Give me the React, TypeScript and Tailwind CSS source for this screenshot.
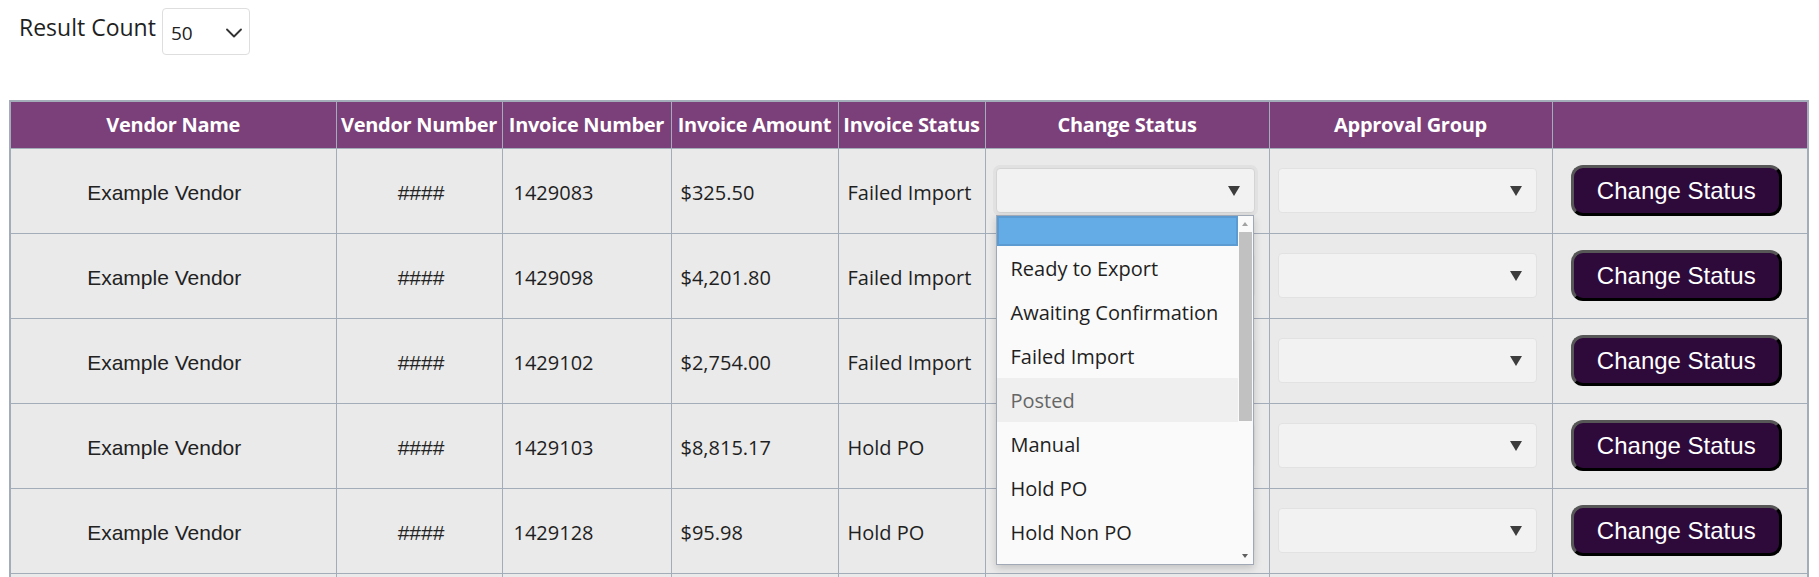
import { ChevronDown } from "lucide-react"

interface InvoiceRow {
  invoice: string
  amount: string
  status: string
}

const rows: InvoiceRow[] = [
  { invoice: "1429083", amount: "$325.50", status: "Failed Import" },
  { invoice: "1429098", amount: "$4,201.80", status: "Failed Import" },
  { invoice: "1429102", amount: "$2,754.00", status: "Failed Import" },
  { invoice: "1429103", amount: "$8,815.17", status: "Hold PO" },
  { invoice: "1429128", amount: "$95.98", status: "Hold PO" },
  { invoice: "1429131", amount: "$1,120.00", status: "Hold PO" },
]

const statusOptions = [
  "Ready to Export",
  "Awaiting Confirmation",
  "Failed Import",
  "Posted",
  "Manual",
  "Hold PO",
  "Hold Non PO",
]

const headers = [
  "Vendor Name",
  "Vendor Number",
  "Invoice Number",
  "Invoice Amount",
  "Invoice Status",
  "Change Status",
  "Approval Group",
  "",
]

const segoe = "font-['Open_Sans',sans-serif]"
const arial = "font-['Liberation_Sans',Arial,sans-serif]"

function StatusList() {
  return (
    <div className="absolute left-0 top-[47px] z-10 h-[350px] w-[258px] overflow-hidden border border-[#a2a9b6] bg-[#fafafa] shadow-[0_3px_8px_rgba(0,0,0,0.18)]">
      <div className="flex h-full">
        <div className="flex-1">
          <div className="h-[30px] border-2 border-[#5b9bd1] bg-[#63ace5]" />
          {statusOptions.map((option) => (
            <div
              key={option}
              className={`flex h-[44px] items-center pl-[14px] pt-[2px] text-[20px] ${
                option === "Posted" ? "bg-[#efefef] text-[#666]" : "text-[#1f1f1f]"
              }`}
            >
              {option}
            </div>
          ))}
        </div>
        {/* scrollbar */}
        <div className="relative w-[15px] bg-[#fafafa]">
          <span className="absolute left-[4px] top-[6px] h-0 w-0 border-x-[3.5px] border-b-[4px] border-x-transparent border-b-[#a3a3a3]" />
          <div className="absolute left-[1px] top-[16px] h-[189px] w-[13px] bg-[#c1c1c1]" />
          <span className="absolute bottom-[6px] left-[4px] h-0 w-0 border-x-[3.5px] border-t-[4px] border-x-transparent border-t-[#5f5f5f]" />
        </div>
      </div>
    </div>
  )
}

function FakeSelect({ open }: { open?: boolean }) {
  return (
    <div className="relative w-[259px]">
      <div
        className={`flex h-[45px] items-center justify-end rounded-[4px] border bg-[#f2f2f2] pr-[14px] ${
          open ? "border-[#d4d4d4] ring-[3px] ring-[#e1e1e1]" : "border-[#e2e2e2]"
        }`}
      >
        <span className="h-0 w-0 border-x-[6.5px] border-t-[10px] border-x-transparent border-t-[#3d3d3d]" />
      </div>
      {open && <StatusList />}
    </div>
  )
}

export default function App() {
  return (
    <div className={`min-h-screen bg-white text-[#1f1f1f] ${segoe}`}>
      <div className="flex h-[100px] items-start pt-[8px]">
        <div className="flex items-center">
          <span className="mb-[8px] ml-[19px] text-[23px] leading-none">Result Count</span>
          <div className="ml-[6px] flex h-[47px] w-[88px] items-center justify-between rounded-[4px] border border-[#dedede] bg-white pl-[8px] pr-[1px]">
            <span className="mt-[4px] text-[19px] text-[#222]">50</span>
            <ChevronDown className="mt-[2px] h-[28px] w-[28px] text-[#333]" strokeWidth={1.6} />
          </div>
        </div>
      </div>

      <table className="ml-[9px] w-[1798px] table-fixed border-collapse border-2 border-[#a3acb9]">
        <colgroup>
          <col className="w-[326px]" />
          <col className="w-[166px]" />
          <col className="w-[169px]" />
          <col className="w-[167px]" />
          <col className="w-[147px]" />
          <col className="w-[284px]" />
          <col className="w-[283px]" />
          <col className="w-[256px]" />
        </colgroup>
        <thead>
          <tr className="h-[47px] bg-[#7b4079]">
            {headers.map((h, i) => (
              <th
                key={i}
                className="whitespace-nowrap border border-[#a3acb9] px-0 text-center text-[20px] font-bold tracking-[-0.3px] text-white"
              >
                {h}
              </th>
            ))}
          </tr>
        </thead>
        <tbody>
          {rows.map((row, i) => (
            <tr key={row.invoice} className="h-[85px] bg-[#eaeaea]">
              <td className={`border border-[#a3acb9] pr-[18px] pt-[5px] text-center text-[21px] text-[#222] ${arial}`}>Example Vendor</td>
              <td className={`border border-[#a3acb9] pl-[4px] pt-[5px] text-center text-[21px] text-[#222] ${arial}`}>####</td>
              <td className="border border-[#a3acb9] px-[11px] pt-[5px] text-[20px]">{row.invoice}</td>
              <td className="border border-[#a3acb9] px-[9px] pt-[5px] text-[20px]">{row.amount}</td>
              <td className="whitespace-nowrap border border-[#a3acb9] px-[9px] pt-[5px] text-[20px]">{row.status}</td>
              <td className="border border-[#a3acb9] pl-[10px] align-middle">
                <FakeSelect open={i === 0} />
              </td>
              <td className="border border-[#a3acb9] pl-[8px] align-middle">
                <FakeSelect />
              </td>
              <td className="border border-[#a3acb9] text-center align-middle">
                <button
                  className={`mr-[7px] h-[51px] w-[211px] rounded-[12px] border-[3px] border-b-black border-l-[#575757] border-r-black border-t-[#575757] bg-[#2e0a3b] text-[24px] text-white ${arial}`}
                >
                  Change Status
                </button>
              </td>
            </tr>
          ))}
        </tbody>
      </table>
    </div>
  )
}
